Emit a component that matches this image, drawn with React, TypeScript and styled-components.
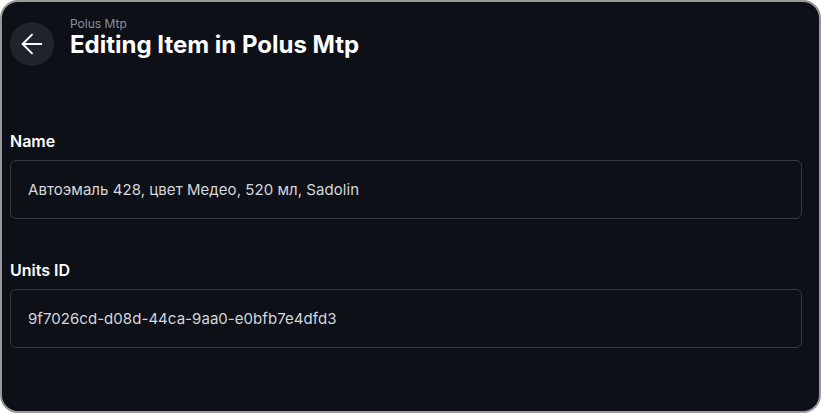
import React from "react";
import styled, { createGlobalStyle } from "styled-components";
import { ArrowLeft } from "lucide-react";

const Global = createGlobalStyle`
  html, body {
    margin: 0;
    padding: 0;
    background: #ffffff;
  }
  * { box-sizing: border-box; }
`;

const Window = styled.div`
  width: 821px;
  height: 413px;
  background: #0d1017;
  border: 2px solid #9a9898;
  border-radius: 18px;
  overflow: hidden;
  padding: 15px 17px 0 8px;
  font-family: Inter, "Noto Sans", sans-serif;
  display: flex;
  flex-direction: column;
`;

const Header = styled.header`
  display: flex;
  align-items: flex-start;
  gap: 16px;
`;

const BackButton = styled.button`
  width: 44px;
  height: 44px;
  margin-top: 5px;
  border-radius: 50%;
  border: none;
  background: #1f232a;
  color: #f5f7fa;
  display: flex;
  align-items: center;
  justify-content: center;
  padding: 0;
  flex-shrink: 0;
  cursor: pointer;
`;

const TitleBlock = styled.div`
  display: flex;
  flex-direction: column;
`;

const Crumb = styled.div`
  font-size: 12px;
  line-height: 14px;
  color: #8a9099;
  font-weight: 400;
`;

const Title = styled.h1`
  margin: 0;
  font-size: 24px;
  line-height: 28px;
  font-weight: 700;
  color: #ffffff;
`;

const Form = styled.div`
  display: flex;
  flex-direction: column;
  gap: 39px;
  margin-top: 63px;
`;

const Field = styled.div`
  display: flex;
  flex-direction: column;
  gap: 7px;
`;

const Label = styled.label`
  font-size: 16px;
  line-height: 24px;
  font-weight: 600;
  color: #ffffff;
`;

const Input = styled.input`
  height: 59px;
  width: 100%;
  background: transparent;
  border: 1px solid #353a42;
  border-radius: 6px;
  padding: 0 17px;
  font-family: Inter, "Noto Sans", sans-serif;
  font-size: 15px;
  letter-spacing: 0.05px;
  color: #d3d7dd;
  outline: none;
`;

export default function App() {
  return (
    <>
      <Global />
      <Window>
        <Header>
          <BackButton aria-label="Back">
            <ArrowLeft size={32} strokeWidth={1.5} />
          </BackButton>
          <TitleBlock>
            <Crumb>Polus Mtp</Crumb>
            <Title>Editing Item in Polus Mtp</Title>
          </TitleBlock>
        </Header>
        <Form>
          <Field>
            <Label>Name</Label>
            <Input readOnly value="Автоэмаль 428, цвет Медео, 520 мл, Sadolin" />
          </Field>
          <Field>
            <Label>Units ID</Label>
            <Input readOnly value="9f7026cd-d08d-44ca-9aa0-e0bfb7e4dfd3" />
          </Field>
        </Form>
      </Window>
    </>
  );
}
